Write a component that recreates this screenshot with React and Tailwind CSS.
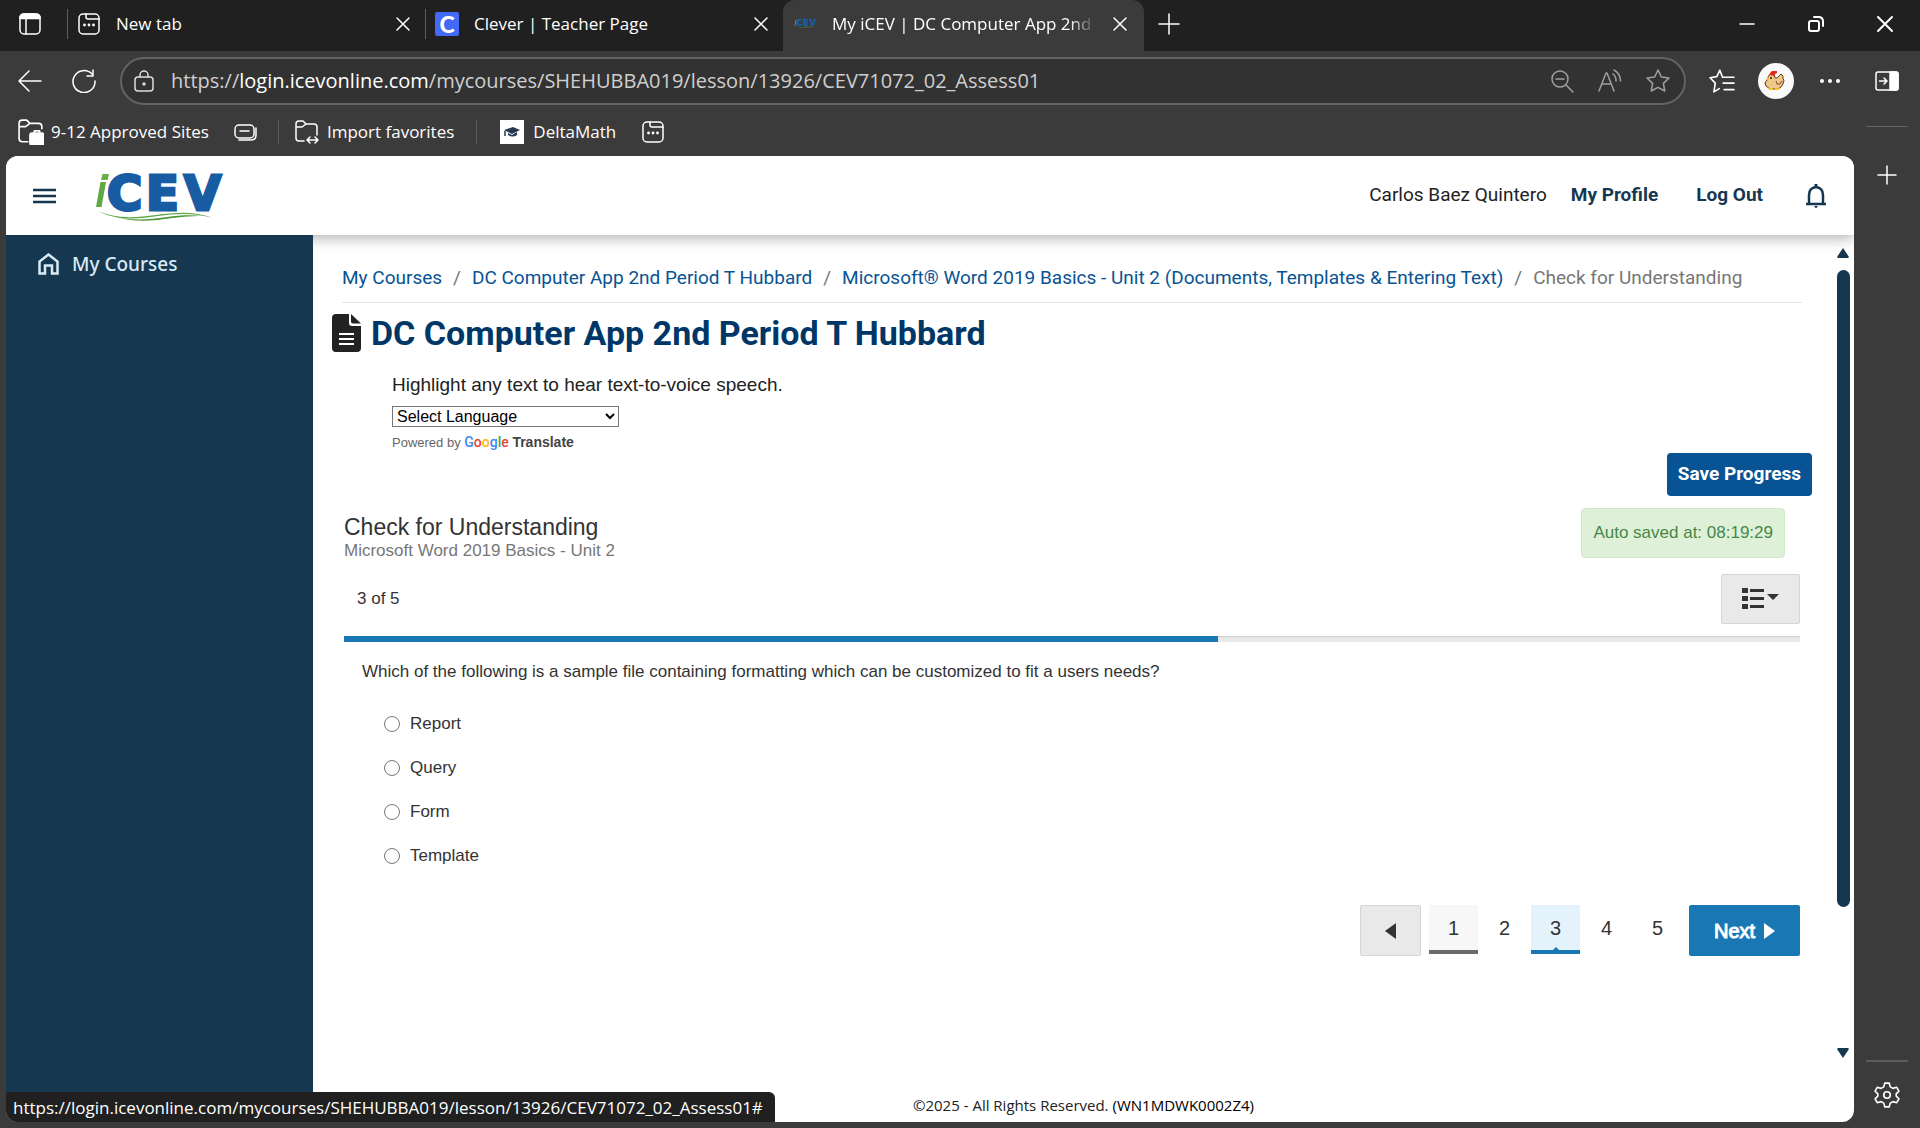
import { useState } from "react";

const lessonUrl = "/mycourses/SHEHUBBA019/lesson/13926/CEV71072_02_Assess01";
const answers = ["Report", "Query", "Form", "Template"];
const total = 5;

const crumbs = [
  "My Courses",
  "DC Computer App 2nd Period T Hubbard",
  "Microsoft® Word 2019 Basics - Unit 2 (Documents, Templates & Entering Text)",
];

// Base for the thin outlined browser icons
const Icon = ({ children, className = "h-6 w-6", box = 24 }) => (
  <svg
    viewBox={`0 0 ${box} ${box}`}
    className={`shrink-0 ${className}`}
    fill="none"
    stroke="currentColor"
    strokeWidth="1.5"
    strokeLinecap="round"
    strokeLinejoin="round"
    aria-hidden="true"
  >
    {children}
  </svg>
);

const CloseIcon = () => (
  <Icon><path d="M6 6l12 12M18 6L6 18" /></Icon>
);

const NewTabIcon = () => (
  <Icon>
    <rect x="2" y="2" width="20" height="20" rx="4" />
    <path d="M9 2v3q0 2 2 2h11" />
    <g fill="currentColor" stroke="none">
      <circle cx="7.5" cy="13" r="1.4" />
      <circle cx="12" cy="13" r="1.4" />
      <circle cx="16.5" cy="13" r="1.4" />
    </g>
  </Icon>
);

const PlusIcon = () => (
  <Icon><path d="M12 2v20M2 12h20" /></Icon>
);

const IcevLogo = ({ className }) => (
  <svg viewBox="0 -15 140 80" className={`shrink-0 ${className}`} role="img" aria-label="iCEV">
    <path d="M7.500 11H13L8.500 36H3z" fill="#5fa843" />
    <path d="M9.500 3h6.500l-1.500 6h-6.500z" fill="#66b045" />
    <g fontFamily="DejaVu Sans" fontWeight="700" fontSize="48" fill="#185da4" stroke="#185da4" strokeWidth="3">
      <text x="14" y="39">C</text>
      <text x="53" y="39">E</text>
      <text x="91" y="39">V</text>
    </g>
    <path d="M3 39c18 9 38 8 60 5 22-3 38-4 57 3-18-5-34-5-55-2-24 4-44 4-62-6z" fill="#5fa843" />
    <path d="M20 45c18 5 34 4 54 1 14-2 24-2 36-1-14 0-24 1-38 3-20 3-38 2-52-3z" fill="#4c9537" />
  </svg>
);

const ChickenAvatar = () => (
  <svg viewBox="0 0 36 36" className="h-9 w-9" role="img" aria-label="Profile">
    <circle cx="18" cy="18" r="18" fill="#fafafa" />
    <path d="M10 14l2-3h4l1 4h2l2-2 2-2 2 2v3l1 1-1 4-2 3-3 2h-8l-4-3-1-3 2-3z" fill="#eec78a" stroke="#6b3a14" strokeWidth="1" />
    <path d="M12 12v-2l2-2h5v2l-2 1-1 2z" fill="#e0281c" />
    <path d="M9 14l2 1v2H9z" fill="#f5c21b" />
    <path d="M11 25h4v2h-4zM17 25h4v2h-4z" fill="#f5c21b" />
    <path d="M18 18l1 3h3l2-3" fill="none" stroke="#8a4a1c" strokeWidth="1" />
    <circle cx="13" cy="15" r="1" fill="#3a1c08" />
  </svg>
);

const BrowserTab = ({ icon, title }) => (
  <div className="flex h-full w-[358px] items-center">
    <span className="h-[30px] w-px bg-[#5c5c5c]" />
    <span className="ml-[9px] flex w-6 justify-center">{icon}</span>
    <span className="ml-[15px] flex-1 truncate leading-6">{title}</span>
    <button aria-label={`Close ${title}`} className="mr-[10px]"><CloseIcon /></button>
  </div>
);

const TabBar = () => (
  <div className="flex h-[51px] items-center bg-[#202020] pb-[3px] text-[17px] text-white">
    <button aria-label="Tab actions" className="ml-[18px] mr-[25px]">
      <Icon>
        <rect x="2" y="2" width="20" height="20" rx="4" />
        <path d="M2 4.500q1-2.500 4-2.500h12q3 0 4 2.500v2H2z" fill="currentColor" />
        <path d="M8 7v15" />
      </Icon>
    </button>
    <BrowserTab icon={<NewTabIcon />} title="New tab" />
    <BrowserTab
      icon={<span className="flex h-6 w-6 items-center justify-center rounded-xs bg-[#436af6] font-[Lato] text-[23px] font-black leading-6">C</span>}
      title="Clever | Teacher Page"
    />
    <div className="-mb-[3px] flex h-[51px] w-[361px] items-center rounded-t-xl bg-[#3b3b3b] pb-[3px] pl-[11px] pr-3">
      <IcevLogo className="w-6" />
      <span className="ml-[14px] flex-1 whitespace-nowrap leading-6 mask-r-from-90%">My iCEV | DC Computer App 2nd</span>
      <button aria-label="Close My iCEV" className="ml-3"><CloseIcon /></button>
    </div>
    <button aria-label="New tab" className="ml-[13px]"><PlusIcon /></button>
    <div className="ml-auto flex items-center gap-[45px] pr-[23px]">
      <button aria-label="Minimize">
        <Icon><path d="M5 12h14" /></Icon>
      </button>
      <button aria-label="Restore">
        <Icon>
          <rect x="5" y="9" width="10" height="10" rx="2" strokeWidth="2" />
          <path d="M10 5h4.500q4.500 0 4.500 4.500V14" strokeWidth="2" />
        </Icon>
      </button>
      <button aria-label="Close window">
        <Icon><path d="M5 5l14 14M19 5L5 19" strokeWidth="2" /></Icon>
      </button>
    </div>
  </div>
);

const AddressBar = () => (
  <div className="flex h-[60px] items-center pl-[18px] pr-3 text-white">
    <button aria-label="Back">
      <Icon><path d="M23 12H1M11 2L1 12l10 10" /></Icon>
    </button>
    <button aria-label="Refresh" className="ml-[30px]">
      <Icon><path d="M20 5a11 11 0 1 0 3 7M21 1v6h-6" /></Icon>
    </button>
    <div className="ml-6 flex h-12 flex-1 items-center rounded-full border-2 border-[#636363] bg-[#323232] pl-[10px] pr-[14px]">
      <Icon className="h-6 w-6 text-[#dcdcdc]">
        <rect x="3" y="8" width="18" height="14" rx="3" />
        <path d="M8 8V6a4 4 0 0 1 8 0v2" />
        <circle cx="12" cy="15" r="1" fill="currentColor" />
      </Icon>
      <p className="ml-[15px] flex-1 truncate text-[20px] leading-7 text-[#cfcfcf]">
        https://<span className="text-white">login.icevonline.com</span>{lessonUrl}
      </p>
      <div className="flex gap-6 text-[#a0a0a0]">
        <button aria-label="Zoom out">
          <Icon><circle cx="10" cy="10" r="8" /><path d="M6 10h8M16 16l7 7" /></Icon>
        </button>
        <button aria-label="Read aloud">
          <Icon><path d="M1 22L8 4h1l7 18M4 15h9M15 5q3 2 3 7M16 1q6 3 6.500 11" /></Icon>
        </button>
        <button aria-label="Add to favorites">
          <Icon><path d="M12 1l3.400 7 7.600 1-5.600 5.400 1.400 7.600L12 18.400 5.200 22l1.400-7.600L1 9l7.600-1z" /></Icon>
        </button>
      </div>
    </div>
    <button aria-label="Favorites" className="ml-[23px]">
      <Icon className="h-[26px] w-[26px]">
        <path d="M14 8.500h-1.500L10 2 7.200 8 1 9l4.800 5-1.300 8 5-3M14 8.500h9M13 14h10M14 20h9" />
      </Icon>
    </button>
    <button aria-label="Profile" className="ml-[23px]"><ChickenAvatar /></button>
    <button aria-label="Settings and more" className="ml-6">
      <Icon>
        <g fill="currentColor" stroke="none">
          <circle cx="4" cy="12" r="2" /><circle cx="12" cy="12" r="2" /><circle cx="20" cy="12" r="2" />
        </g>
      </Icon>
    </button>
  </div>
);

const Bookmarks = () => (
  <div className="flex h-[45px] items-center pb-[3px] pl-[18px] text-[17px] text-white">
    <a href="#" className="flex items-center gap-[7px]">
      <Icon className="h-[26px] w-[26px]">
        <path d="M9 21H4q-3 0-3-3V4q0-3 3-3h4l3 3h8q3 0 3 3v2M1 7h6l4-3" />
        <rect x="11" y="13" width="13" height="11" rx="2" fill="currentColor" />
        <path d="M15 13v-2h5v2" />
      </Icon>
      9-12 Approved Sites
    </a>
    <button aria-label="Collections" className="ml-[25px]">
      <Icon>
        <rect x="1" y="5" width="19" height="13" rx="4" />
        <path d="M6 11h9M22 8v7q0 5-5 5H5" />
      </Icon>
    </button>
    <span className="ml-5 h-6 w-px bg-[#5c5c5c]" />
    <a href="#" className="ml-4 flex items-center gap-2">
      <Icon>
        <path d="M9 21H4q-3 0-3-3V4q0-3 3-3h4l3 3h8q3 0 3 3v8M1 7h6l4-3M15 17l-3 3 3 3M20 17l3 3-3 3M12 20h11" />
      </Icon>
      Import favorites
    </a>
    <span className="ml-[22px] h-6 w-px bg-[#5c5c5c]" />
    <a href="#" className="ml-[23px] flex items-center gap-[9px]">
      <svg viewBox="0 0 24 24" className="h-6 w-6 bg-white" aria-hidden="true">
        <path d="M4 10l9-3 7 3-8 4z" fill="#24384f" />
        <path d="M8 13l4 2 5-3v3q-4 3-9 0z" fill="#24384f" />
        <path d="M5 11v5" stroke="#24384f" strokeWidth="1.500" />
      </svg>
      DeltaMath
    </a>
    <button aria-label="New tab page" className="ml-[25px]"><NewTabIcon /></button>
  </div>
);

const EdgeSidebar = () => (
  <aside className="flex w-[66px] shrink-0 flex-col items-center text-white">
    <button aria-label="Hide sidebar" className="mt-[18px]">
      <Icon>
        <rect x="1" y="3" width="22" height="18" rx="2" />
        <path d="M15 3h6q2 0 2 2v14q0 2-2 2h-6z" fill="currentColor" />
        <path d="M4.500 12h7M9 9l3 3-3 3" />
      </Icon>
    </button>
    <span className="mt-[33px] h-px w-[42px] bg-[#636363]" />
    <button aria-label="Customize" className="mt-9">
      <Icon><path d="M12 3v18M3 12h18" /></Icon>
    </button>
    <span className="mt-auto h-0.5 w-[42px] bg-[#5c5c5c]" />
    <button aria-label="Settings" className="mb-5 mt-5">
      <Icon className="h-[26px] w-[26px]">
        <path d="M10 1h4l1 3.500 2.500 1.400 3.500-1 2 3.600-2.500 2.500v2l2.500 2.500-2 3.600-3.500-1-2.500 1.400-1 3.500h-4l-1-3.500-2.500-1.400-3.500 1-2-3.600 2.500-2.500v-2L1 8.500l2-3.600 3.500 1L9 4.500z" />
        <circle cx="12" cy="12" r="3" />
      </Icon>
    </button>
  </aside>
);

const SiteHeader = () => (
  <header className="relative z-10 flex h-[79px] shrink-0 items-center bg-white pl-[27px] pr-[26px] font-[Roboto] text-[19px] text-[#153850] shadow-[0_2px_14px_rgba(0,0,0,0.35)]">
    <button aria-label="Menu">
      <svg viewBox="0 0 23 16" className="h-4 w-[23px]" stroke="currentColor" strokeWidth="2.500" aria-hidden="true">
        <path d="M0 2h23M0 8h23M0 14h23" />
      </svg>
    </button>
    <a href="#" className="ml-[37px]"><IcevLogo className="w-[140px]" /></a>
    <span className="ml-auto text-[#222]">Carlos Baez Quintero</span>
    <a href="#" className="ml-6 font-bold">My Profile</a>
    <a href="#" className="ml-[38px] font-bold">Log Out</a>
    <button aria-label="Notifications" className="ml-[41px]">
      <svg viewBox="0 0 24 26" className="h-[26px] w-6" fill="none" stroke="currentColor" strokeWidth="2.500" aria-hidden="true">
        <path d="M2 21h20M5 21v-9q0-7 7-8 7 1 7 8v9" />
        <path d="M12 4V1" strokeWidth="3" />
        <path d="M10 23h4l-2 2.500z" fill="currentColor" stroke="none" />
      </svg>
    </button>
  </header>
);

const Scrollbar = () => (
  <div className="flex w-[22px] shrink-0 flex-col items-center pb-[3px] pt-3 text-[#153850]" aria-hidden="true">
    <svg viewBox="0 0 14 12" className="h-3 w-[14px]"><path d="M7 1l6 9-1 1H2l-1-1z" fill="currentColor" /></svg>
    <div className="mt-[11px] w-full flex-1">
      <div className="mx-auto h-[82%] w-[13px] rounded-full bg-[#153850]" />
    </div>
    <svg viewBox="0 0 14 12" className="h-3 w-[14px]"><path d="M7 11L1 2l1-1h10l1 1z" fill="currentColor" /></svg>
  </div>
);

const Quiz = () => {
  const [current, setCurrent] = useState(3);
  const [choice, setChoice] = useState("");

  return (
    <section className="mx-0.5 text-[17px] text-[#333]">
      <div className="mt-3 flex items-start justify-between">
        <div className="pt-[5px]">
          <h2 className="text-[23px] leading-7">Check for Understanding</h2>
          <p className="leading-5 text-[#777]">Microsoft Word 2019 Basics - Unit 2</p>
        </div>
        <p className="mr-[15px] rounded border border-[#d0e9c6] bg-[#dff0d8] px-[11px] py-3 leading-6 text-[#468847]">
          Auto saved at: 08:19:29
        </p>
      </div>

      <div className="mt-[13px] flex items-center justify-between">
        <p className="ml-[13px]">{current} of {total}</p>
        <button aria-label="Question list" className="flex h-[50px] w-[79px] items-center justify-center rounded-xs border border-[#d5d5d5] bg-[#e9e9e9]">
          <svg viewBox="0 0 37 22" className="h-[22px] w-[37px]" fill="#333" aria-hidden="true">
            <path d="M0 0h6v5H0zM0 8h6v5H0zM0 16h6v5H0zM8 1h14v3H8zM8 9h14v3H8zM8 17h14v3H8zM25 6h12l-6 6z" />
          </svg>
        </button>
      </div>

      <div className="mt-3 h-[6px] bg-[#e9e9e9] shadow-[inset_0_1px_1px_rgba(0,0,0,0.12)]">
        <div className="h-full bg-[#1977b3]" style={{ width: `${(current / total) * 100}%` }} />
      </div>

      <fieldset className="ml-[18px]">
        <legend className="pt-[18px] leading-6">
          Which of the following is a sample file containing formatting which can be customized to fit a users needs?
        </legend>
        <div className="ml-[22px] mt-[18px]">
          {answers.map((answer) => (
            <label key={answer} className="flex h-11 items-center gap-[10px]">
              <input
                type="radio"
                name="answer"
                className="h-4 w-4"
                checked={choice === answer}
                onChange={() => setChoice(answer)}
              />
              {answer}
            </label>
          ))}
        </div>
      </fieldset>

      <nav className="mt-[27px] flex justify-end">
        <button aria-label="Previous" className="mr-2 flex h-[51px] w-[61px] items-center justify-center rounded-xs border border-[#d5d5d5] bg-[#e9e9e9]">
          <svg viewBox="0 0 11 16" className="h-4 w-[11px]"><path d="M11 0v16L0 8z" fill="#333" /></svg>
        </button>
        <div className="mr-[7px] flex gap-0.5 text-[20px]">
          {[1, 2, 3, 4, 5].map((page) => (
            <button
              key={page}
              onClick={() => setCurrent(page)}
              className={`relative h-[49px] w-[49px] border-b-4 ${
                page === current
                  ? "border-[#1977b3] bg-[#e4f2fc]"
                  : page === 1
                  ? "border-[#6b6b6b] bg-[#f7f7f7]"
                  : "border-transparent"
              }`}
            >
              {page}
              {page === current && (
                <svg viewBox="0 0 6 3" className="absolute bottom-0 left-1/2 h-[3px] w-[6px] -translate-x-1/2">
                  <path d="M0 3l3-3 3 3z" fill="#1977b3" />
                </svg>
              )}
            </button>
          ))}
        </div>
        <button className="flex h-[51px] w-[111px] items-center justify-center gap-[9px] rounded-xs bg-[#1977b3] text-[20px] text-white [-webkit-text-stroke:1px_white]">
          Next
          <svg viewBox="0 0 11 16" className="h-4 w-[11px]"><path d="M0 0v16l11-8z" fill="currentColor" /></svg>
        </button>
      </nav>
    </section>
  );
};

const Lesson = () => (
  <main className="flex min-w-0 flex-1 flex-col">
    <div className="flex flex-1">
      <div className="flex-1 pl-[29px] pr-[30px] pt-[31px] font-['Liberation_Sans',sans-serif]">
        <nav className="flex gap-[11px] whitespace-nowrap border-b border-[#e2e2e2] pb-3 font-[Roboto] text-[19px] leading-6 text-[#777]">
          {crumbs.map((crumb) => (
            <span key={crumb} className="flex gap-[11px]">
              <a href="#" className="text-[#085394]">{crumb}</a>/
            </span>
          ))}
          <span>Check for Understanding</span>
        </nav>

        <div className="-ml-[10px] mt-[10px] flex items-center gap-[10px]">
          <svg viewBox="0 0 29 38" className="h-[38px] w-[29px]" aria-hidden="true">
            <path d="M4 0h13v9q0 3 3 3h9v22q0 4-4 4H4q-4 0-4-4V4q0-4 4-4z" fill="#222" />
            <path d="M19 0l10 9.500h-8q-2 0-2-2z" fill="#222" />
            <path d="M7 20h15M7 25h15M7 30h15" stroke="#fff" strokeWidth="2" />
          </svg>
          <h1 className="font-[Roboto] text-[34px] font-bold leading-10 text-[#003767]">DC Computer App 2nd Period T Hubbard</h1>
        </div>

        <div className="ml-[50px] mt-5 text-[#222]">
          <p className="text-[19px] leading-6">Highlight any text to hear text-to-voice speech.</p>
          <select aria-label="Language" className="mt-[9px] block h-[21px] w-[227px] appearance-auto border border-[#767676] bg-white text-base leading-4 text-black">
            <option>Select Language</option>
          </select>
          <p className="mt-[5px] text-[13px] leading-5 text-[#666]">
            Powered by{" "}
            <span className="font-[Roboto] text-[14px] font-medium">
              <span className="text-[#4285f4]">G</span>
              <span className="text-[#ea4335]">o</span>
              <span className="text-[#fbbc05]">o</span>
              <span className="text-[#4285f4]">g</span>
              <span className="text-[#34a853]">l</span>
              <span className="text-[#ea4335]">e</span>
            </span>{" "}
            <a href="#" className="text-[14px] font-bold text-[#444]">Translate</a>
          </p>
        </div>

        <div className="-mr-[10px] flex justify-end">
          <button className="h-[43px] rounded bg-[#085394] px-[11px] font-[Roboto] text-[19px] font-bold text-white">
            Save Progress
          </button>
        </div>

        <Quiz />
      </div>
      <Scrollbar />
    </div>
    <footer className="flex h-[60px] items-end justify-center gap-1 pb-[5px] text-[15px] leading-6 text-[#222]">
      ©2025 - All Rights Reserved. <span className="font-medium text-black">(WN1MDWK0002Z4)</span>
    </footer>
  </main>
);

export default function App() {
  return (
    <div className="flex min-h-screen flex-col bg-[#3b3b3b] font-['Open_Sans','Noto_Sans',sans-serif]">
      <TabBar />
      <div className="flex flex-1">
        <div className="flex min-w-0 flex-1 flex-col">
          <AddressBar />
          <Bookmarks />
          <div className="relative mb-[6px] ml-[6px] flex flex-1 flex-col overflow-hidden rounded-xl bg-white">
            <SiteHeader />
            <div className="flex flex-1">
              <aside className="relative z-20 w-[307px] shrink-0 bg-[#153850] px-8 pt-[15px]">
                <a href="#" className="flex items-center gap-[13px] font-['Noto_Sans',sans-serif] text-[19px] font-medium leading-7 text-[#d9eaf5]">
                  <svg viewBox="0 0 21 22" className="h-[22px] w-[21px]" fill="none" stroke="currentColor" strokeWidth="2.500" aria-hidden="true">
                    <path d="M1.500 20.500V8.500l9-7 9 7v12h-5.500v-8h-7v8z" />
                  </svg>
                  My Courses
                </a>
              </aside>
              <Lesson />
            </div>
            {/* Link preview in the window corner */}
            <div className="absolute bottom-0 left-0 z-30 rounded-tr-md bg-[#202020] pl-[7px] pr-3 pt-0.5 text-[17px] leading-7 text-white">
              https://login.icevonline.com{lessonUrl}#
            </div>
          </div>
        </div>
        <EdgeSidebar />
      </div>
    </div>
  );
}
